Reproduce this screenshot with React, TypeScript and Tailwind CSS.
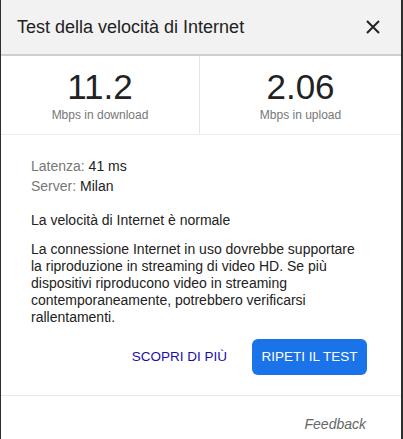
import React from "react";

export default function App() {
  return (
    <div className="w-[403px] h-[439px] bg-white border-l border-r-2 border-[#2e2e2e] flex flex-col font-['Liberation_Sans',Arial,sans-serif] overflow-hidden">
      <div className="h-[56px] shrink-0 bg-[#f2f2f2] border-b-2 border-[#cfcfcf] flex items-center justify-between pl-[16px] pr-[20px]">
        <div className="text-[18px] text-[#222]">Test della velocità di Internet</div>
        <svg width="16" height="16" viewBox="0 0 16 16" className="text-[#222]">
          <path d="M2 2 L14 14 M14 2 L2 14" stroke="currentColor" strokeWidth="2" fill="none" />
        </svg>
      </div>
      <div className="h-[79px] shrink-0 flex border-b border-[#ececec]">
        <div className="w-[199px] border-r border-[#e6e6e6] flex flex-col items-center pt-[13px]">
          <div className="text-[35px] leading-[35px] text-[#222]">11.2</div>
          <div className="text-[12px] leading-[14px] text-[#777] mt-[4px]">Mbps in download</div>
        </div>
        <div className="flex-1 flex flex-col items-center pt-[13px]">
          <div className="text-[35px] leading-[35px] text-[#222]">2.06</div>
          <div className="text-[12px] leading-[14px] text-[#777] mt-[4px]">Mbps in upload</div>
        </div>
      </div>
      <div className="pl-[30px] pr-[32px] pt-[21px] text-[14px] text-[#222]">
        <div className="leading-[20px]">
          <span className="text-[#777]">Latenza: </span>41 ms
        </div>
        <div className="leading-[20px]">
          <span className="text-[#777]">Server: </span>Milan
        </div>
        <div className="leading-[20px] mt-[14px]">La velocità di Internet è normale</div>
        <p className="leading-[17px] mt-[11px]">
          La connessione Internet in uso dovrebbe supportare la riproduzione in streaming di video HD. Se più dispositivi riproducono video in streaming contemporaneamente, potrebbero verificarsi rallentamenti.
        </p>
      </div>
      <div className="flex justify-end items-center pr-[34px] mt-[13px] gap-[25px] shrink-0">
        <button className="text-[13.5px] text-[#1a0dab] uppercase">Scopri di più</button>
        <button className="h-[36px] w-[115px] rounded-[6px] bg-[#1a73e8] text-white text-[13.5px]">RIPETI IL TEST</button>
      </div>
      <div className="mt-[20px] border-t border-[#e8e8e8] flex-1 flex items-start justify-end pr-[35px] pt-[20px]">
        <span className="italic text-[14px] leading-[16px] text-[#666]">Feedback</span>
      </div>
    </div>
  );
}
